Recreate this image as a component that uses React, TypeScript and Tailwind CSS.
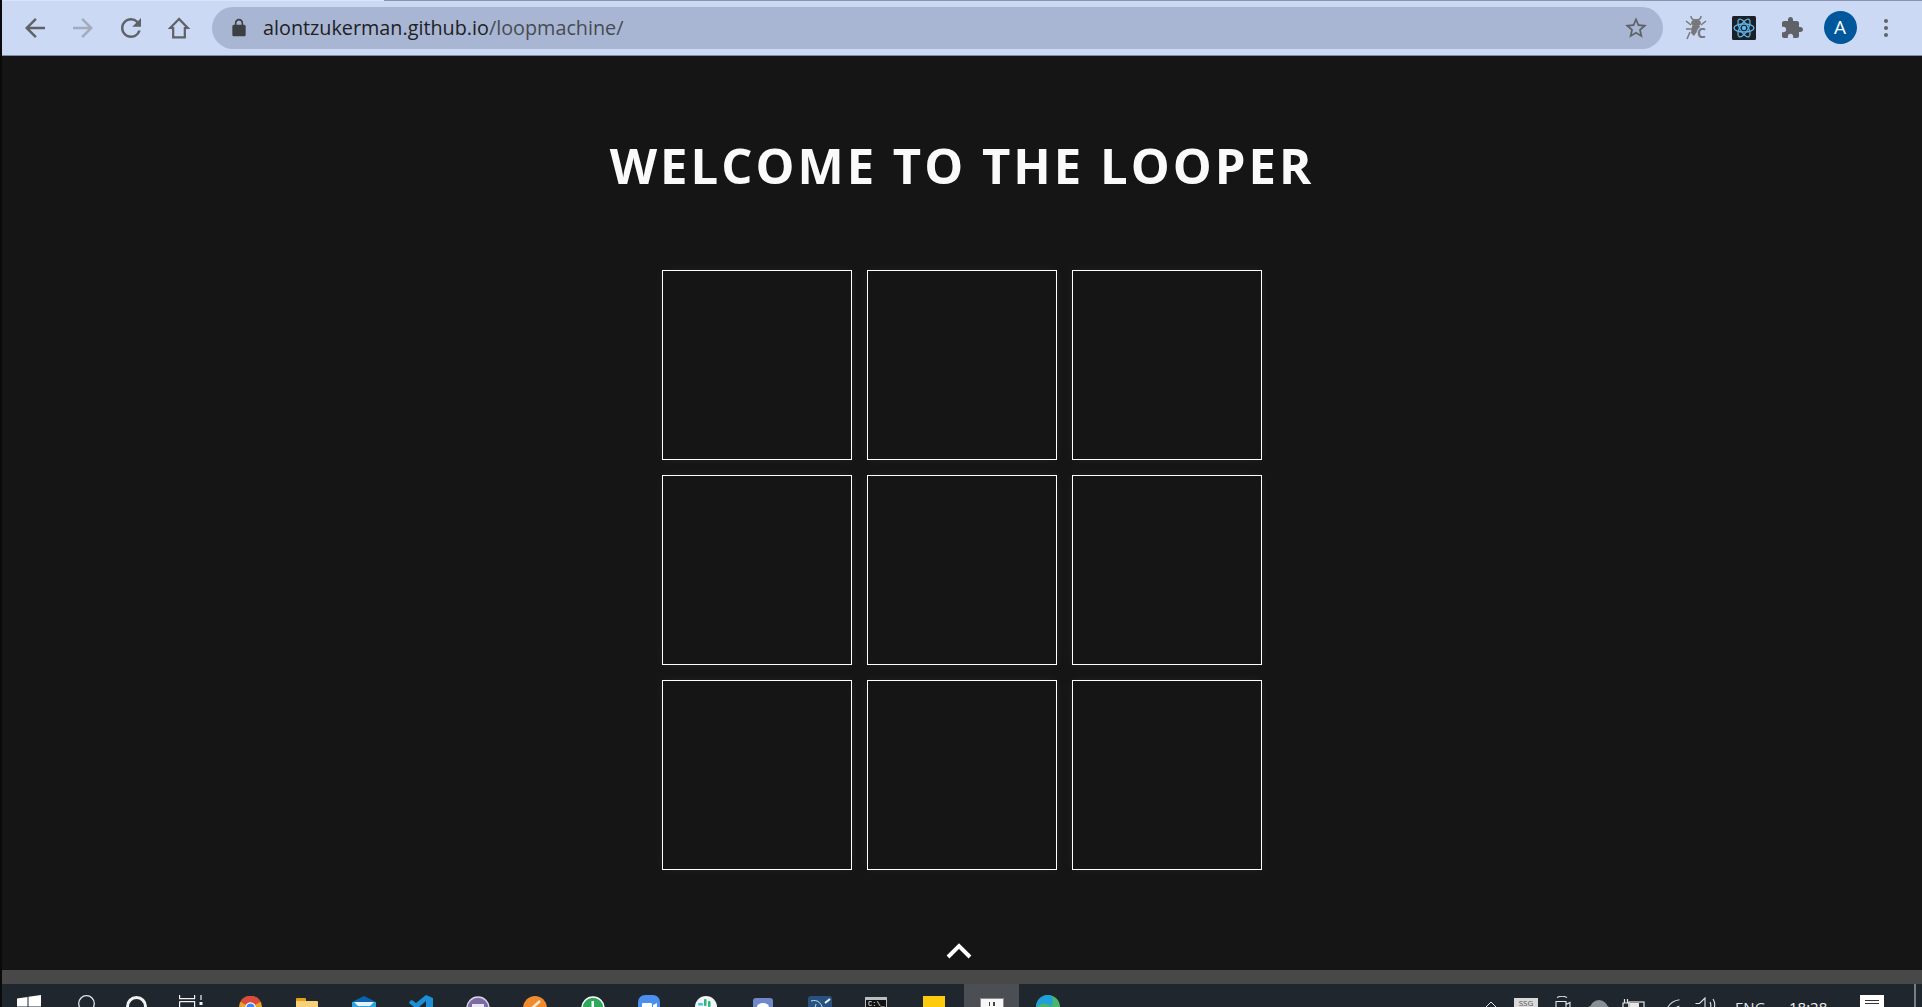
import React from "react";

const Btn = ({ children, w = "w-[48px]" }: { children: React.ReactNode; w?: string }) => (
  <div className={`${w} h-[48px] flex items-center justify-center shrink-0`}>{children}</div>
);

const tiles = Array.from({ length: 9 }, (_, i) => i);

function Toolbar() {
  return (
    <div className="h-[56px] shrink-0 bg-[#cbd9f5] border-b border-[#7f8ba8] flex flex-col">
      <div className="h-px flex shrink-0">
        <div className="w-[382px] bg-[#dbe5f9]" />
        <div className="flex-1 bg-[#8a94ab]" />
      </div>
      <div className="flex-1 flex items-center pl-[9px] pb-[1px]">
        <Btn>
          <svg width="30" height="30" viewBox="0 0 24 24" fill="#5f6368"><path d="M20 11H7.83l5.59-5.59L12 4l-8 8 8 8 1.41-1.41L7.83 13H20v-2z" /></svg>
        </Btn>
        <Btn>
          <svg width="30" height="30" viewBox="0 0 24 24" fill="#a3abbd"><path d="M4 11h12.17l-5.59-5.59L12 4l8 8-8 8-1.41-1.41L16.17 13H4v-2z" /></svg>
        </Btn>
        <Btn>
          <svg width="30" height="30" viewBox="0 0 24 24" fill="#5f6368"><path d="M17.65 6.35A7.958 7.958 0 0 0 12 4c-4.42 0-7.99 3.58-7.99 8s3.57 8 7.99 8c3.730 0 6.840-2.550 7.730-6h-2.080A5.990 5.990 0 0 1 12 18c-3.310 0-6-2.690-6-6s2.690-6 6-6c1.660 0 3.140.690 4.220 1.780L13 11h7V4l-2.350 2.350z" /></svg>
        </Btn>
        <Btn>
          <svg width="28" height="28" viewBox="0 0 24 24" fill="none" stroke="#5f6368" strokeWidth="1.9"><path d="M12 4.200 4.500 12H7v8h10v-8h2.500z" /></svg>
        </Btn>
        <div className="ml-[9px] w-[1451px] h-[42px] rounded-full bg-[#a8b6d3] flex items-center pl-[17px] pr-[14px]">
          <svg width="20" height="20" viewBox="0 0 24 24" fill="#3c4043"><path d="M18 8h-1V6c0-2.760-2.240-5-5-5S7 3.240 7 6v2H6c-1.100 0-2 .9-2 2v10c0 1.100.9 2 2 2h12c1.100 0 2-.9 2-2V10c0-1.100-.9-2-2-2zM9 6c0-1.660 1.340-3 3-3s3 1.340 3 3v2H9V6z" /></svg>
          <div className="ml-[14px] text-[19.8px] font-['Open_Sans',sans-serif] text-[#202124]">
            alontzukerman.github.io<span className="text-[#474b52]">/loopmachine/</span>
          </div>
          <svg className="ml-auto" width="26" height="26" viewBox="0 0 24 24" fill="#5f6368"><path d="M22 9.240l-7.190-.62L12 2 9.190 8.630 2 9.240l5.460 4.730L5.820 21 12 17.270 18.180 21l-1.640-7.030L22 9.240zM12 15.400l-3.760 2.270 1-4.280-3.320-2.880 4.380-.38L12 6.100l1.710 4.040 4.380.38-3.320 2.880 1 4.280L12 15.400z" /></svg>
        </div>
        <div className="ml-[9px] flex items-center">
          <Btn>
            <svg width="24" height="26" viewBox="0 0 24 26" fill="#77787a">
              <path d="M7 1c0 3 2 4 5 4s5-1 5-4" fill="none" stroke="#77787a" strokeWidth="1.500" />
              <ellipse cx="12" cy="8" rx="5" ry="3.500" />
              <path d="M8 11h8l-1 4-3 3-2 3-3-3z" />
              <path d="M2 6l5 4M22 6l-5 4M2 14h6M6 17l-3 7" fill="none" stroke="#77787a" strokeWidth="1.500" />
              <text x="13" y="23" fontSize="14" fontWeight="700" fontFamily="'Open Sans',sans-serif" fill="#77787a" stroke="#cbd9f5" strokeWidth="2" paintOrder="stroke">C</text>
            </svg>
          </Btn>
          <Btn>
            <svg width="24" height="24" viewBox="0 0 24 24">
              <rect width="24" height="24" rx="1.500" fill="#1c2128" />
              <g fill="none" stroke="#61b3e8" strokeWidth="1.300">
                <ellipse cx="12" cy="12" rx="10" ry="4" />
                <ellipse cx="12" cy="12" rx="10" ry="4" transform="rotate(60 12 12)" />
                <ellipse cx="12" cy="12" rx="10" ry="4" transform="rotate(120 12 12)" />
              </g>
              <circle cx="12" cy="12" r="2.200" fill="#61b3e8" />
            </svg>
          </Btn>
          <Btn>
            <svg width="24" height="24" viewBox="0 0 24 24" fill="#5f6368"><path d="M20.500 11H19V7c0-1.100-.9-2-2-2h-4V3.500C13 2.120 11.880 1 10.500 1S8 2.120 8 3.500V5H4c-1.100 0-1.990.9-1.990 2v3.800H3.500c1.490 0 2.700 1.210 2.700 2.700s-1.210 2.700-2.700 2.700H2V20c0 1.100.9 2 2 2h3.800v-1.500c0-1.490 1.210-2.700 2.700-2.700 1.490 0 2.700 1.210 2.700 2.700V22H17c1.100 0 2-.9 2-2v-4h1.500c1.380 0 2.500-1.120 2.500-2.500S21.880 11 20.500 11z" /></svg>
          </Btn>
          <Btn>
            <div className="w-[33px] h-[33px] rounded-full bg-[#01579b] flex items-center justify-center text-white text-[19px] font-['Open_Sans',sans-serif]">A</div>
          </Btn>
          <Btn w="w-[44px]">
            <div className="flex flex-col gap-[3px]">
              <div className="w-[4px] h-[4px] rounded-full bg-[#5f6368]" />
              <div className="w-[4px] h-[4px] rounded-full bg-[#5f6368]" />
              <div className="w-[4px] h-[4px] rounded-full bg-[#5f6368]" />
            </div>
          </Btn>
        </div>
      </div>
    </div>
  );
}

function Main() {
  return (
    <main className="flex-1 bg-[#151515] flex flex-col items-center overflow-hidden">
      <h1 className="mt-[74px] h-[71px] leading-[71px] text-[49px] font-bold tracking-[3px] text-[#fafafa] font-['Open_Sans',sans-serif] whitespace-nowrap">
        WELCOME TO THE LOOPER
      </h1>
      <div className="mt-[69px] grid grid-cols-3 gap-[15px]">
        {tiles.map((t) => (
          <div key={t} className="w-[190px] h-[190px] border border-white shadow-[0_0_10px_rgba(255,255,255,0.05)]" />
        ))}
      </div>
      <svg className="mt-[71px] ml-[-7px]" width="28" height="18" viewBox="0 0 28 18" fill="none" stroke="#fff" strokeWidth="4">
        <path d="M3 16 14 5l11 11" />
      </svg>
    </main>
  );
}

function Taskbar() {
  return (
    <div className="h-[23px] shrink-0 bg-[#1f262e] flex overflow-hidden">
      <svg className="ml-[15px] mt-[11px] shrink-0" width="24" height="24" viewBox="0 0 24 24" fill="#fff"><path d="M0 3.500 10.500 2v9.500H0zM11.500 1.800 24 0v11.500H11.500zM0 12.500h10.500V22L0 20.500zM11.500 12.500H24V24l-12.500-1.800z" /></svg>
      <svg className="ml-[37px] mt-[11px] shrink-0" width="17" height="17" viewBox="0 0 17 17" fill="none" stroke="#e6e6e6" strokeWidth="1.300"><circle cx="8.500" cy="8.500" r="7.800" /></svg>
      <svg className="ml-[31px] mt-[12px] shrink-0" width="21" height="21" viewBox="0 0 21 21" fill="none" stroke="#f2f2f2" strokeWidth="3"><circle cx="10.500" cy="10.500" r="9" /></svg>
      <svg className="ml-[32px] mt-[11px] shrink-0" width="25" height="16" viewBox="0 0 25 16" fill="none" stroke="#f2f2f2" strokeWidth="1.200">
        <path d="M.6 0v3.600h15V0M.6 6.600h15V16M.6 6.600V16" />
        <path d="M22 0v5" />
        <rect x="20.500" y="7" width="3" height="3" fill="#f2f2f2" stroke="none" />
      </svg>
      <svg className="ml-[35px] mt-[12px] shrink-0" width="23" height="23" viewBox="0 0 24 24">
        <circle cx="12" cy="12" r="12" fill="#e2a42b" />
        <path d="M12 12 1.500 6A12 12 0 0 1 22.500 6z" fill="#dc4a3d" />
        <circle cx="12" cy="12" r="5.500" fill="#fff" />
        <circle cx="12" cy="12" r="4.200" fill="#3f86ee" />
      </svg>
      <svg className="ml-[34px] mt-[14px] shrink-0" width="22" height="18" viewBox="0 0 22 18">
        <rect y="0" width="10" height="6" rx="1" fill="#e5a11c" />
        <rect y="3" width="22" height="15" rx="1" fill="#f8d07a" />
      </svg>
      <svg className="ml-[34px] mt-[12px] shrink-0" width="24" height="20" viewBox="0 0 24 20">
        <path d="M12 0 24 6H0z" fill="#0a63b0" />
        <rect y="6" width="24" height="14" fill="#2aa3e0" />
        <path d="M2 6h20l-4 4H6z" fill="#e8f1f8" />
      </svg>
      <svg className="ml-[33px] mt-[11px] shrink-0" width="24" height="24" viewBox="0 0 24 24">
        <path d="M17 0 24 3v18l-7 3-10-9-4 3-3-2 5-4-5-4 1-2 2-1 4 3z" fill="#1d8fd8" />
        <path d="M17 6v12l-7-6z" fill="#1f262e" />
      </svg>
      <svg className="ml-[33px] mt-[12px] shrink-0" width="24" height="24" viewBox="0 0 24 24">
        <circle cx="12" cy="12" r="11" fill="#7c6ca3" stroke="#d9d4e4" strokeWidth="1.500" />
        <rect x="6" y="8" width="12" height="5" fill="#e8e6ee" />
      </svg>
      <svg className="ml-[33px] mt-[12px] shrink-0" width="24" height="24" viewBox="0 0 24 24">
        <circle cx="12" cy="12" r="12" fill="#ef8a2e" />
        <path d="M8 13 17 5" stroke="#f8e8d0" strokeWidth="2.500" />
      </svg>
      <svg className="ml-[34px] mt-[12px] shrink-0" width="24" height="24" viewBox="0 0 24 24">
        <circle cx="12" cy="12" r="11" fill="#2ea85a" stroke="#fff" strokeWidth="1.500" />
        <rect x="10.500" y="5" width="2.500" height="7" fill="#fff" />
      </svg>
      <svg className="ml-[33px] mt-[11px] shrink-0" width="22" height="22" viewBox="0 0 22 22">
        <rect width="22" height="22" rx="7" fill="#4a90ec" />
        <rect x="4" y="8" width="10" height="7" rx="1" fill="#fff" />
        <path d="M15 10l4-2v7l-4-2z" fill="#fff" />
      </svg>
      <svg className="ml-[35px] mt-[12px] shrink-0" width="22" height="22" viewBox="0 0 22 22">
        <circle cx="11" cy="11" r="11" fill="#f2f4f5" />
        <rect x="9" y="3" width="2.500" height="7" rx="1" fill="#2eb67d" />
        <rect x="13" y="5" width="2.500" height="6" rx="1" fill="#2eb67d" />
        <rect x="3" y="7" width="5" height="2.500" rx="1" fill="#36c5f0" />
      </svg>
      <svg className="ml-[36px] mt-[14px] shrink-0" width="20" height="20" viewBox="0 0 20 20">
        <rect width="20" height="20" rx="3" fill="#7289c9" />
        <ellipse cx="10" cy="9" rx="6" ry="4" fill="#fff" />
      </svg>
      <svg className="ml-[35px] mt-[12px] shrink-0" width="24" height="20" viewBox="0 0 24 20">
        <rect width="24" height="20" rx="3" fill="#27527f" />
        <path d="M3 5c7-2 11 2 13 12M8 8c-1 3-1 6 0 9" fill="none" stroke="#cfdbe8" strokeWidth="1" />
        <path d="M17 7l5-4" stroke="#f0f4f8" strokeWidth="2" />
      </svg>
      <div className="ml-[33px] mt-[13px] w-[22px] h-[12px] shrink-0 bg-[#111] border-t-[3px] border-x border-[#b9bcc0] text-white text-[7px] leading-[8px] font-['Liberation_Mono',monospace] pl-[2px] overflow-hidden">C:\_</div>
      <div className="ml-[36px] mt-[12px] w-[22px] h-[20px] shrink-0 bg-[#fccb0e]" />
      <div className="ml-[19px] w-[55px] shrink-0 bg-[#4b4e53] flex justify-center">
        <div className="mt-[14px] w-[24px] h-[12px] bg-[#f7f7f7] border border-[#8c8c8c] flex justify-center gap-[3px] pt-[3px]">
          <div className="w-[1.5px] h-[4px] bg-[#444]" />
          <div className="w-[1.5px] h-[4px] bg-[#444]" />
        </div>
      </div>
      <svg className="ml-[17px] mt-[11px] shrink-0" width="24" height="24" viewBox="0 0 24 24">
        <circle cx="12" cy="12" r="12" fill="#4db56a" />
        <path d="M0 12A12 12 0 0 1 15 .4C18 4 17 9 15 12c-2-3-7-5-11-2-2 1.500-3 2-4 2z" fill="#1f9fdc" />
      </svg>

      <div className="ml-auto flex">
        <svg className="mt-[17px] shrink-0" width="12" height="7" viewBox="0 0 12 7" fill="none" stroke="#e6e6e6" strokeWidth="1"><path d="M.5 6.500 6 1l5.500 5.500" /></svg>
        <div className="ml-[17px] mt-[14px] w-[24px] h-[16px] shrink-0 bg-[#d9d9d9] text-[#555] text-[8px] leading-[9px] text-center font-['Open_Sans',sans-serif]">SSG</div>
        <svg className="ml-[17px] mt-[12px] shrink-0" width="16" height="18" viewBox="0 0 16 18" fill="none" stroke="#e6e6e6" strokeWidth="1.100">
          <path d="M2 1.500C5 0 9 0 12 1.500" />
          <path d="M1 5.500h10v12H1zM11 8.500l4-2v8" />
        </svg>
        <svg className="ml-[16px] mt-[16px] shrink-0" width="23" height="14" viewBox="0 0 23 14" fill="#8a8f94">
          <circle cx="12" cy="9" r="9" />
          <circle cx="4" cy="10" r="4" />
          <circle cx="19" cy="10" r="4" />
        </svg>
        <svg className="ml-[12px] mt-[15px] shrink-0" width="23" height="14" viewBox="0 0 23 14" fill="none" stroke="#e6e6e6" strokeWidth="1.200">
          <path d="M1 4h6v6H1zM2.500 0v4M5.500 0v4" />
          <rect x="7" y="3" width="15" height="10" />
          <rect x="8" y="4" width="9" height="8" fill="#e6e6e6" stroke="none" />
        </svg>
        <svg className="ml-[20px] mt-[15px] shrink-0" width="15" height="15" viewBox="0 0 15 15" fill="none" stroke="#d8d8d8" strokeWidth="1.100">
          <path d="M.500 14.500C2 7 7 2 14.500 .8M6 15C7 11 10 8.500 14.500 7" />
        </svg>
        <svg className="ml-[15px] mt-[13px] shrink-0" width="22" height="16" viewBox="0 0 22 16" fill="none" stroke="#e6e6e6" strokeWidth="1.100">
          <path d="M.500 6.500h4L10 1v14M15 5c1 2 1 5 0 7M18 2c2 3 2 8 0 12" />
        </svg>
        <div className="ml-[18px] mt-[12px] h-[22px] text-[15px] leading-[22px] text-[#e6e6e6] font-['Open_Sans',sans-serif] w-[32px] shrink-0">ENG</div>
        <div className="ml-[22px] mt-[12px] h-[22px] text-[15px] leading-[22px] text-[#f2f2f2] font-['Open_Sans',sans-serif] w-[43px] shrink-0">18:28</div>
        <div className="ml-[28px] mt-[11px] w-[24px] h-[20px] shrink-0 bg-white flex flex-col gap-[2px] items-center pt-[5px]">
          <div className="w-[14px] h-px bg-[#333]" />
          <div className="w-[14px] h-px bg-[#333]" />
        </div>
        <div className="ml-[30px] w-[2px] bg-[#7a7d80] shrink-0 mr-[6px]" />
      </div>
    </div>
  );
}

export default function App() {
  return (
    <div className="h-[1007px] w-[1922px] overflow-hidden flex flex-col border-l-2 border-[#0a0a0a] bg-[#151515]">
      <Toolbar />
      <Main />
      <div className="h-[14px] shrink-0 bg-[#484848]" />
      <Taskbar />
    </div>
  );
}
